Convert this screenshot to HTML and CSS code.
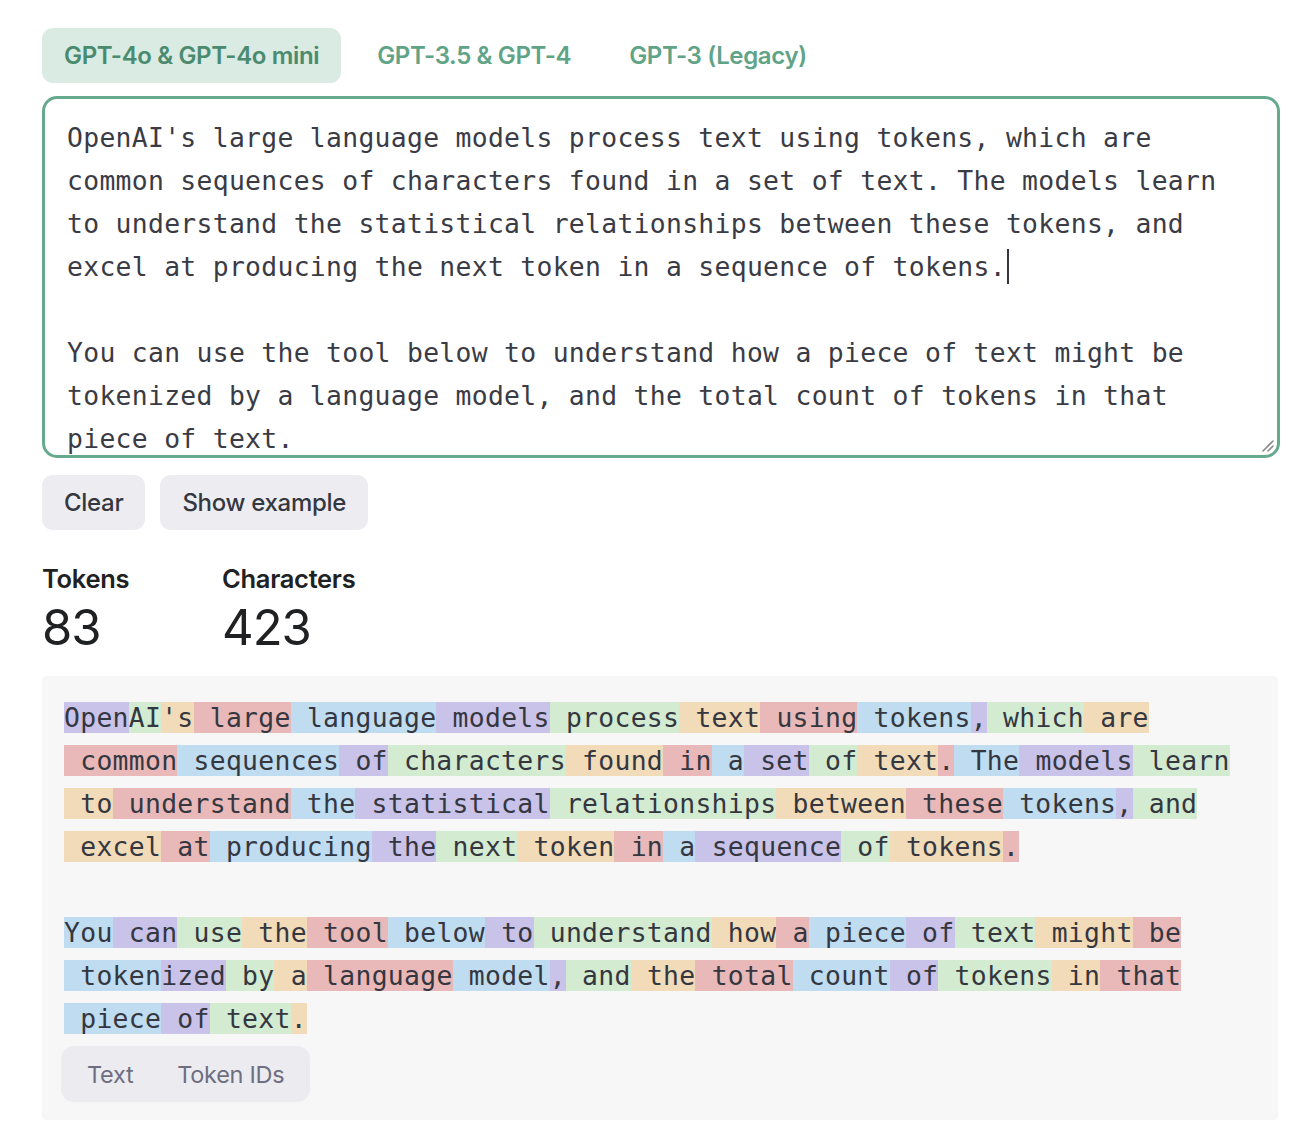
FILE: index.html
```html
<!DOCTYPE html>
<html lang="en">
<head>
<meta charset="utf-8">
<title>Tokenizer</title>
<link rel="stylesheet" href="styles.css">
</head>
<body>
<main class="page">
  <nav class="tabs">
    <button class="tab tab-active">GPT-4o &amp; GPT-4o mini</button>
    <button class="tab">GPT-3.5 &amp; GPT-4</button>
    <button class="tab">GPT-3 (Legacy)</button>
  </nav>

  <div class="editor" role="textbox" aria-multiline="true">
    <div class="line">OpenAI's large language models process text using tokens, which are</div>
    <div class="line">common sequences of characters found in a set of text. The models learn</div>
    <div class="line">to understand the statistical relationships between these tokens, and</div>
    <div class="line">excel at producing the next token in a sequence of tokens.<span class="caret"></span></div>
    <div class="line"> </div>
    <div class="line">You can use the tool below to understand how a piece of text might be</div>
    <div class="line">tokenized by a language model, and the total count of tokens in that</div>
    <div class="line">piece of text.</div>
    <svg class="grip" width="14" height="14" viewBox="0 0 14 14"><path d="M13 3 L3 13 M13 8 L8 13" stroke="#8a8a8a" stroke-width="1.6" stroke-linecap="round" fill="none"/></svg>
  </div>

  <div class="actions">
    <button class="btn">Clear</button>
    <button class="btn">Show example</button>
  </div>

  <div class="stats">
    <div class="stat stat-tokens">
      <div class="stat-label">Tokens</div>
      <div class="stat-value">83</div>
    </div>
    <div class="stat">
      <div class="stat-label">Characters</div>
      <div class="stat-value">423</div>
    </div>
  </div>

  <section class="output">
    <div class="tline"><span class="t pu">Open</span><span class="t gr">AI</span><span class="t or">'s</span><span class="t re"> large</span><span class="t bl"> language</span><span class="t pu"> models</span><span class="t gr"> process</span><span class="t or"> text</span><span class="t re"> using</span><span class="t bl"> tokens</span><span class="t pu">,</span><span class="t gr"> which</span><span class="t or"> are</span></div>
    <div class="tline"><span class="t re"> common</span><span class="t bl"> sequences</span><span class="t pu"> of</span><span class="t gr"> characters</span><span class="t or"> found</span><span class="t re"> in</span><span class="t bl"> a</span><span class="t pu"> set</span><span class="t gr"> of</span><span class="t or"> text</span><span class="t re">.</span><span class="t bl"> The</span><span class="t pu"> models</span><span class="t gr"> learn</span></div>
    <div class="tline"><span class="t or"> to</span><span class="t re"> understand</span><span class="t bl"> the</span><span class="t pu"> statistical</span><span class="t gr"> relationships</span><span class="t or"> between</span><span class="t re"> these</span><span class="t bl"> tokens</span><span class="t pu">,</span><span class="t gr"> and</span></div>
    <div class="tline"><span class="t or"> excel</span><span class="t re"> at</span><span class="t bl"> producing</span><span class="t pu"> the</span><span class="t gr"> next</span><span class="t or"> token</span><span class="t re"> in</span><span class="t bl"> a</span><span class="t pu"> sequence</span><span class="t gr"> of</span><span class="t or"> tokens</span><span class="t re">.</span></div>
    <div class="tline"> </div>
    <div class="tline"><span class="t bl">You</span><span class="t pu"> can</span><span class="t gr"> use</span><span class="t or"> the</span><span class="t re"> tool</span><span class="t bl"> below</span><span class="t pu"> to</span><span class="t gr"> understand</span><span class="t or"> how</span><span class="t re"> a</span><span class="t bl"> piece</span><span class="t pu"> of</span><span class="t gr"> text</span><span class="t or"> might</span><span class="t re"> be</span></div>
    <div class="tline"><span class="t bl"> token</span><span class="t pu">ized</span><span class="t gr"> by</span><span class="t or"> a</span><span class="t re"> language</span><span class="t bl"> model</span><span class="t pu">,</span><span class="t gr"> and</span><span class="t or"> the</span><span class="t re"> total</span><span class="t bl"> count</span><span class="t pu"> of</span><span class="t gr"> tokens</span><span class="t or"> in</span><span class="t re"> that</span></div>
    <div class="tline"><span class="t bl"> piece</span><span class="t pu"> of</span><span class="t gr"> text</span><span class="t or">.</span></div>

    <div class="toggle">
      <button class="toggle-item">Text</button>
      <button class="toggle-item">Token IDs</button>
    </div>
  </section>
</main>
</body>
</html>
```

FILE: styles.css
```css
* { box-sizing: border-box; }

html, body {
  margin: 0;
  background: #ffffff;
}

body {
  font-family: Inter, "Noto Sans", "Liberation Sans", sans-serif;
  color: #202123;
}

button {
  font-family: inherit;
  border: 0;
  cursor: pointer;
}

.page {
  width: 1280px;
  padding: 28px 0 0 42px;
}

.tabs {
  display: flex;
  gap: 14px;
}

.tab {
  height: 55px;
  padding: 0 22px;
  border-radius: 11px;
  background: transparent;
  font-size: 24px;
  font-weight: 600;
  letter-spacing: -0.35px;
  color: #5fa487;
}

.tab-active {
  background: #d9ebe2;
  color: #4a8a6f;
}

.editor {
  position: relative;
  margin-top: 13px;
  width: 1238px;
  height: 362px;
  border: 3px solid #66aa8d;
  border-radius: 15px;
  padding: 17px 22px 0 22px;
  overflow: hidden;
  background: #ffffff;
  font-family: "DejaVu Sans Mono", "Liberation Mono", monospace;
  font-size: 26.4px;
  letter-spacing: 0.3px;
  line-height: 43px;
  color: #3a3b44;
}

.line {
  white-space: pre;
  height: 43px;
}

.caret {
  display: inline-block;
  width: 2px;
  height: 35px;
  background: #353740;
  vertical-align: -8px;
  margin-left: 1px;
}

.grip {
  position: absolute;
  right: 3px;
  bottom: 3px;
}

.actions {
  display: flex;
  gap: 15px;
  margin-top: 17px;
}

.btn {
  height: 55px;
  padding: 0 22px;
  border-radius: 11px;
  background: #ececf1;
  font-size: 24px;
  font-weight: 500;
  letter-spacing: -0.3px;
  color: #353740;
}

.stats {
  display: flex;
  margin-top: 32px;
}

.stat-tokens {
  width: 180px;
}

.stat-label {
  font-size: 25.5px;
  font-weight: 600;
  letter-spacing: -0.3px;
  line-height: 34px;
  color: #202123;
}

.stat-value {
  font-size: 49px;
  font-weight: 400;
  line-height: 64px;
  letter-spacing: -1px;
  color: #202123;
}

.output {
  margin-top: 16px;
  width: 1236px;
  background: #f7f7f8;
  border-radius: 4px;
  padding: 20px 22px 18px 22px;
  font-family: "DejaVu Sans Mono", "Liberation Mono", monospace;
  font-size: 26.4px;
  letter-spacing: 0.3px;
  line-height: 43px;
  color: #353740;
}

.tline {
  white-space: pre;
  height: 43px;
}

.t.pu { background: #c9c2e9; }
.t.gr { background: #d3ebd1; }
.t.or { background: #f1dbb9; }
.t.re { background: #e9b8b8; }
.t.bl { background: #bfdcf1; }

.toggle {
  display: inline-flex;
  margin-top: 6px;
  margin-left: -3px;
  padding: 4px;
  height: 56px;
  border-radius: 13px;
  background: #ebebf0;
  font-family: Inter, "Noto Sans", "Liberation Sans", sans-serif;
}

.toggle-item {
  padding: 0 22px;
  border-radius: 9px;
  background: transparent;
  font-size: 23.5px;
  font-weight: 400;
  letter-spacing: -0.3px;
  color: #6e6e80;
}
```
